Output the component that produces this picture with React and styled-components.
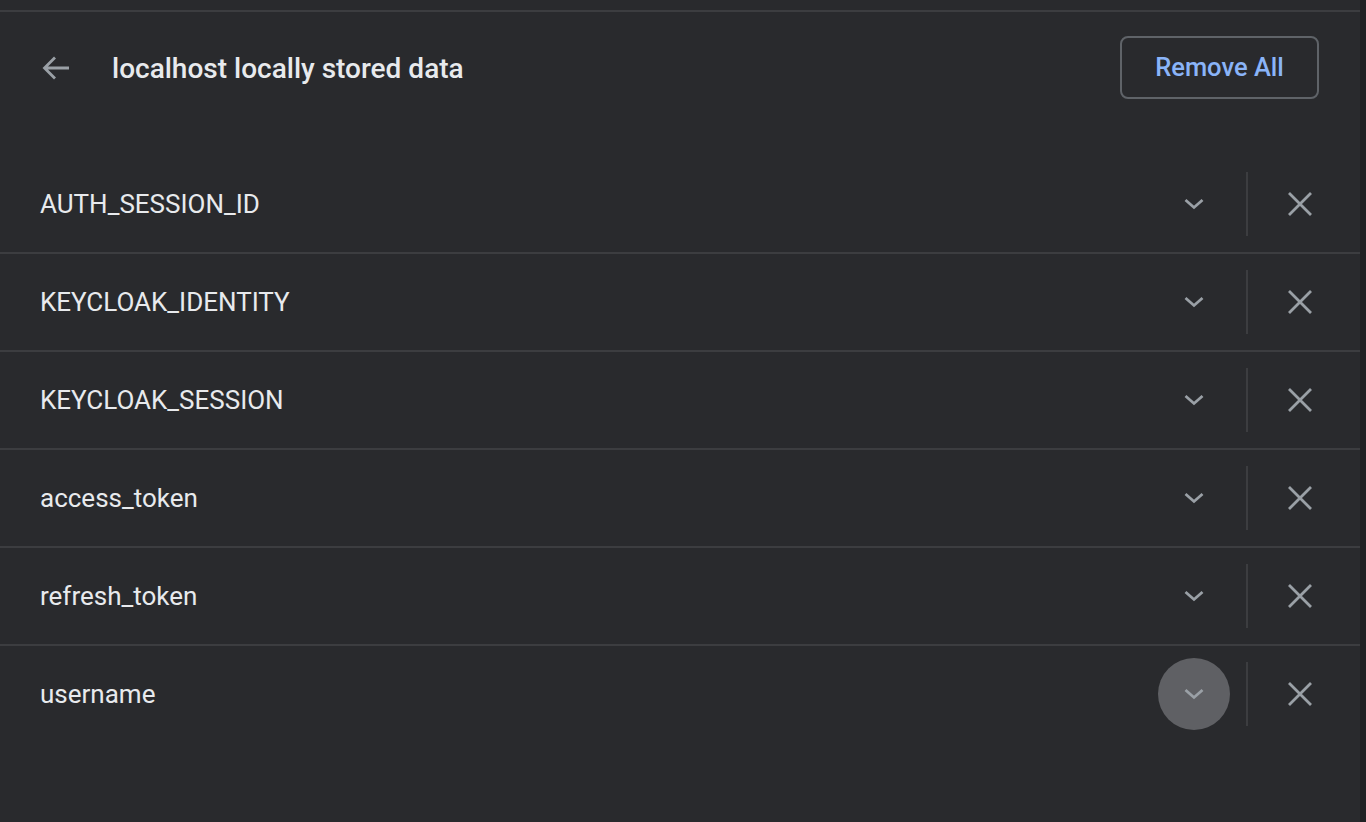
import styled, { createGlobalStyle } from 'styled-components'

const GlobalStyle = createGlobalStyle`
  html, body {
    margin: 0;
    padding: 0;
    background: #292a2d;
    font-family: Roboto, "Liberation Sans", sans-serif;
  }
`

const items = [
  'AUTH_SESSION_ID',
  'KEYCLOAK_IDENTITY',
  'KEYCLOAK_SESSION',
  'access_token',
  'refresh_token',
  'username',
]

const Chevron = () => (
  <svg width="24" height="24" viewBox="0 0 24 24">
    <path d="M3.5 8 L12 15.5 L20.5 8" fill="none" stroke="#9aa0a6" strokeWidth="2.8" />
  </svg>
)

const Cross = () => (
  <svg width="26" height="26" viewBox="0 0 26 26">
    <path d="M2 2 L24 24 M24 2 L2 24" fill="none" stroke="#9aa0a6" strokeWidth="2.8" />
  </svg>
)

const BackArrow = () => (
  <svg width="32" height="32" viewBox="0 0 32 32">
    <path d="M29 16 H5 M15 5.5 L4.5 16 L15 26.5" fill="none" stroke="#9aa0a6" strokeWidth="2.8" />
  </svg>
)

export default function App() {
  return (
    <>
      <GlobalStyle />
      <Page>
        <Main>
          <TopRule />
          <Header>
            <BackButton><BackArrow /></BackButton>
            <Title>localhost locally stored data</Title>
            <RemoveAll>Remove All</RemoveAll>
          </Header>
          <List>
            {items.map((name, i) => (
              <Row key={name} $last={i === items.length - 1}>
                <Name>{name}</Name>
                <Actions>
                  <ExpandButton $hover={name === 'username'}><Chevron /></ExpandButton>
                  <Divider />
                  <DeleteButton><Cross /></DeleteButton>
                </Actions>
              </Row>
            ))}
          </List>
        </Main>
        <Scrollbar />
      </Page>
    </>
  )
}

const Page = styled.div`
  display: flex;
  height: 822px;
  background: #292a2d;
`

const Main = styled.div`
  flex: 1;
  display: flex;
  flex-direction: column;
`

const Scrollbar = styled.div`
  width: 6px;
  background: #202124;
`

const TopRule = styled.div`
  margin-top: 10px;
  height: 2px;
  background: #3c3d40;
`

const Header = styled.div`
  display: flex;
  align-items: center;
  height: 112px;
  padding: 0 41px 0 40px;
`

const BackButton = styled.div`
  display: flex;
  width: 32px;
  height: 32px;
  margin-right: 40px;
`

const Title = styled.h1`
  flex: 1;
  margin: 0;
  font-size: 28px;
  font-weight: 500;
  color: #e8eaed;
`

const RemoveAll = styled.button`
  width: 199px;
  height: 63px;
  border: 2px solid #5f6368;
  border-radius: 8px;
  background: transparent;
  color: #8ab4f8;
  font-family: Roboto, "Liberation Sans", sans-serif;
  font-size: 25.5px;
  font-weight: 500;
  margin-top: -2px;
`

const List = styled.div`
  margin-top: 32px;
  display: flex;
  flex-direction: column;
`

const Row = styled.div`
  display: flex;
  align-items: center;
  height: 96px;
  padding-left: 40px;
  border-bottom: ${p => (p.$last ? 'none' : '2px solid #3c3d40')};
`

const Name = styled.div`
  flex: 1;
  font-size: 26px;
  color: #e8eaed;
`

const Actions = styled.div`
  display: flex;
  align-items: center;
  padding-right: 24px;
`

const ExpandButton = styled.div`
  width: 72px;
  height: 72px;
  border-radius: 50%;
  display: flex;
  align-items: center;
  justify-content: center;
  background: ${p => (p.$hover ? '#5f6064' : 'transparent')};
`

const Divider = styled.div`
  width: 2px;
  height: 64px;
  background: #3c3d40;
  margin: 0 16px;
`

const DeleteButton = styled.div`
  width: 72px;
  height: 72px;
  display: flex;
  align-items: center;
  justify-content: center;
`
